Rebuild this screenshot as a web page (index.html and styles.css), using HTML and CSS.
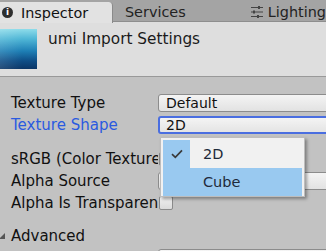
FILE: index.html
```html
<!DOCTYPE html>
<html>
<head>
<meta charset="utf-8">
<link rel="stylesheet" href="styles.css">
</head>
<body>
<div class="window">
  <div class="tabs">
    <div class="tab active">
      <span class="info-icon">i</span>
      <span class="tab-label">Inspector</span>
    </div>
    <div class="tab services"><span class="tab-label">Services</span></div>
    <div class="tab lighting">
      <svg class="light-icon" width="12" height="12" viewBox="0 0 12 12">
        <g fill="#444">
          <rect x="0" y="1" width="12" height="1"/>
          <rect x="0" y="5.5" width="12" height="1"/>
          <rect x="0" y="10" width="12" height="1"/>
          <rect x="7" y="0" width="2" height="3"/>
          <rect x="2" y="4.5" width="2" height="3"/>
          <rect x="6" y="9" width="2" height="3"/>
        </g>
      </svg>
      <span class="tab-label">Lighting</span>
    </div>
  </div>
  <div class="header">
    <div class="thumb"></div>
    <div class="title">umi Import Settings</div>
  </div>
  <div class="props">
    <div class="row">
      <div class="label">Texture Type</div>
      <div class="field"><div class="dropdown">Default</div></div>
    </div>
    <div class="row">
      <div class="label focused">Texture Shape</div>
      <div class="field"><div class="dropdown focus">2D</div></div>
    </div>
    <div class="row spaced tall">
      <div class="label">sRGB (Color Texture)</div>
      <div class="field"><div class="checkbox"></div></div>
    </div>
    <div class="row">
      <div class="label">Alpha Source</div>
      <div class="field"><div class="dropdown"></div></div>
    </div>
    <div class="row">
      <div class="label">Alpha Is Transparency</div>
      <div class="field"><div class="checkbox"></div></div>
    </div>
    <div class="row spaced foldout">
      <span class="arrow"></span>
      <div class="label">Advanced</div>
    </div>
    <div class="row">
      <div class="label"></div>
      <div class="field"><div class="dropdown"></div></div>
    </div>
  </div>
  <div class="popup">
    <div class="item selected">
      <span class="check">
        <svg width="12" height="10" viewBox="0 0 12 10"><path d="M1 5.2 L4.3 8.3 L11 1.3" fill="none" stroke="#3a3a3a" stroke-width="1.7"/></svg>
      </span>
      <span class="item-label">2D</span>
    </div>
    <div class="item hover">
      <span class="check"></span>
      <span class="item-label">Cube</span>
    </div>
  </div>
</div>
</body>
</html>
```

FILE: styles.css
```css
html, body {
  margin: 0;
  padding: 0;
}
body {
  width: 326px;
  height: 251px;
  overflow: hidden;
  background: #c2c2c2;
  font-family: "DejaVu Sans", Verdana, sans-serif;
  font-size: 15px;
  color: #111;
}
.window {
  position: relative;
  width: 326px;
  height: 251px;
  overflow: hidden;
}
.tabs {
  display: flex;
  height: 22px;
  background: #a4a4a4;
  border-bottom: 1px solid #8e8e8e;
  box-sizing: border-box;
  font-size: 14.4px;
}
.tab {
  display: flex;
  align-items: center;
  height: 22px;
  box-sizing: border-box;
  color: #222;
  padding-top: 1px;
}
.tab.active {
  width: 114px;
  margin-top: 2px;
  height: 21px;
  background: #e2e2e2;
  border-radius: 0 4px 0 0;
  border-right: 1px solid #8a8a8a;
  padding-left: 2px;
  padding-top: 0;
  color: #111;
}
.info-icon {
  width: 11px;
  height: 11px;
  border-radius: 50%;
  background: #2e2e2e;
  color: #fff;
  font-size: 9px;
  font-weight: bold;
  line-height: 11px;
  text-align: center;
  margin-right: 8px;
}
.tab.services {
  padding-left: 12px;
  width: 139px;
}
.tab.lighting {
  padding-left: 0;
}
.light-icon {
  margin-right: 5px;
}
.header {
  display: flex;
  align-items: flex-start;
  height: 54px;
  background: #dedede;
  border-bottom: 1px solid #999;
}
.thumb {
  width: 37px;
  height: 40px;
  margin-top: 7px;
  background:
    linear-gradient(90deg, rgba(255,255,255,0.12), rgba(255,255,255,0) 60%),
    linear-gradient(180deg, #8edcea 0%, #4fb6d6 25%, #1e7fb5 55%, #0e4d86 80%, #0a3566 100%);
}
.title {
  margin-left: 11px;
  margin-top: 8px;
  font-size: 15.3px;
  color: #1a1a1a;
}
.props {
  padding-top: 15px;
}
.row {
  display: flex;
  align-items: center;
  height: 22px;
}
.row.tall {
  height: 23px;
}
.row.spaced {
  margin-top: 11px;
}
.label {
  width: 147px;
  flex: none;
  padding-left: 11px;
  white-space: nowrap;
  overflow: hidden;
}
.label.focused {
  color: #2a5ae0;
}
.field {
  flex: none;
  width: 200px;
}
.dropdown {
  height: 18px;
  box-sizing: border-box;
  border: 1px solid #8c8c8c;
  border-radius: 3px;
  background: linear-gradient(#f4f4f4, #e2e2e2);
  padding-left: 7px;
  line-height: 16px;
  font-size: 14px;
  color: #111;
}
.dropdown.focus {
  border: 2px solid #4a6ee0;
  background: linear-gradient(#f4f4f4, #e4e4e4);
  line-height: 14px;
  padding-left: 6px;
}
.checkbox {
  width: 14px;
  height: 14px;
  box-sizing: border-box;
  margin-left: 1px;
  border: 1px solid #8a8a8a;
  border-radius: 2px;
  background: linear-gradient(#f0f0f0, #dadada);
}
.foldout {
  position: relative;
}
.foldout .label {
  width: auto;
}
.arrow {
  position: absolute;
  left: -1px;
  top: 8px;
  width: 0;
  height: 0;
  border-left: 6px solid transparent;
  border-bottom: 6px solid #555;
}
.popup {
  position: absolute;
  left: 160px;
  top: 137px;
  width: 145px;
  height: 60px;
  box-sizing: border-box;
  padding: 2px;
  background: #f1f1f1;
  border: 1px solid #bdbdbd;
  box-shadow: 2px 2px 3px rgba(0,0,0,0.35);
  font-size: 14.5px;
}
.item {
  display: flex;
  align-items: center;
  height: 28px;
}
.check {
  width: 27px;
  height: 28px;
  display: flex;
  align-items: center;
  justify-content: center;
  flex: none;
}
.item.selected .check {
  background: #99c9f0;
}
.item.hover {
  background: #99c9f0;
}
.item-label {
  margin-left: 13px;
  color: #1e2a3a;
}
```
